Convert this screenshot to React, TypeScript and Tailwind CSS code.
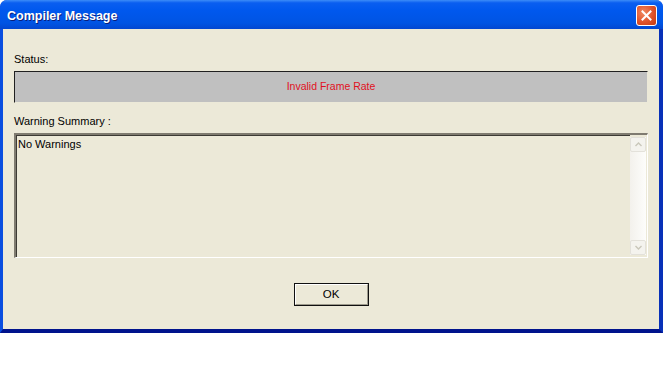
import React from "react";

export default function App() {
  return (
    <div className="w-[663px] h-[384px] bg-white font-['Liberation_Sans',Arial,sans-serif] text-[11px] text-black">
      <div className="w-[663px] h-[333px] flex flex-col rounded-t-[7px] bg-[#0a3fd0] overflow-hidden">
        {/* Title bar */}
        <div className="h-[29px] flex items-center pl-[7px] pr-[6px] bg-[linear-gradient(to_bottom,#3c8cf8_0%,#0a5ef0_10%,#0058ee_35%,#0054e3_80%,#0347d0_100%)]">
          <div className="flex-1 text-white font-bold text-[12.5px] leading-none pt-[3px] [text-shadow:1px_1px_0_#0a1e7a]">
            Compiler Message
          </div>
          <div className="w-[21px] h-[21px] rounded-[3px] border border-white bg-[radial-gradient(circle_at_35%_35%,#f08a62_0%,#e0522a_55%,#c53a10_100%)] flex items-center justify-center mt-[1px]">
            <svg width="13" height="13" viewBox="0 0 13 13">
              <path d="M2.5 2.5 L10.5 10.5 M10.5 2.5 L2.5 10.5" stroke="white" strokeWidth="2" strokeLinecap="square" />
            </svg>
          </div>
        </div>
        {/* Body */}
        <div className="flex-1 flex border-l-[3px] border-l-[#0a4ee0] border-r-[4px] border-r-[#0831b8] border-b-[4px] border-b-[#00138c]">
          <div className="flex-1 bg-[#ece9d8] flex flex-col pl-[11px] pr-[11px] pt-[24px]">
            <div className="leading-[13px]">Status:</div>
            <div className="mt-[5px] h-[32px] bg-[#c0c0c0] border-t border-l border-t-[#202020] border-l-[#202020] border-b border-r border-b-[#ece9d8] border-r-[#ece9d8] flex items-center justify-center text-[#e0101e] text-[10.5px]">
              Invalid Frame Rate
            </div>
            <div className="mt-[12px] leading-[13px]">Warning Summary :</div>
            <div className="mt-[5px] h-[125px] flex border-t-2 border-l-2 border-t-[#7f7b70] border-l-[#7f7b70] border-b border-r border-b-white border-r-white">
              <div className="flex-1 pl-[1px] pt-[2px] leading-[13px] border-t border-l border-t-[#3c3a34] border-l-[#3c3a34]">No Warnings</div>
              <div className="w-[16px] my-[2px] mr-[1px] flex flex-col bg-[linear-gradient(to_right,#f3f1ec,#fdfdfb)]">
                <div className="h-[15px] rounded-[2px] border border-[#e3e1da] bg-[#f4f3ee] flex items-center justify-center">
                  <svg width="7" height="5" viewBox="0 0 7 5">
                    <path d="M0.5 4 L3.5 1 L6.5 4" fill="none" stroke="#c9c7ba" strokeWidth="1.4" />
                  </svg>
                </div>
                <div className="flex-1" />
                <div className="h-[15px] rounded-[2px] border border-[#e3e1da] bg-[#f4f3ee] flex items-center justify-center">
                  <svg width="7" height="5" viewBox="0 0 7 5">
                    <path d="M0.5 1 L3.5 4 L6.5 1" fill="none" stroke="#c9c7ba" strokeWidth="1.4" />
                  </svg>
                </div>
              </div>
            </div>
            <div className="mt-[25px] flex justify-center">
              <div className="w-[75px] h-[23px] border border-[#101010] bg-[#ece9d8] flex">
                <div className="flex-1 border-t border-l border-t-white border-l-white border-b border-r border-b-[#9d9a8c] border-r-[#9d9a8c] flex items-center justify-center leading-none text-[11.5px]">
                  OK
                </div>
              </div>
            </div>
          </div>
        </div>
      </div>
    </div>
  );
}
